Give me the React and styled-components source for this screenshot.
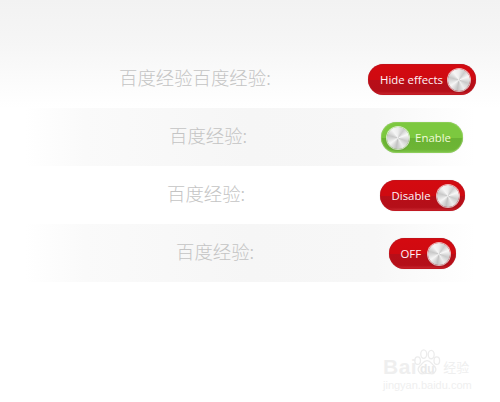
import React from "react";
import styled, { createGlobalStyle } from "styled-components";

const Global = createGlobalStyle`
  html, body { margin: 0; padding: 0; background: #fff; }
  body { width: 500px; height: 402px; overflow: hidden; }
`;

const Page = styled.div`
  position: relative;
  width: 500px;
  height: 402px;
  padding-top: 50px;
  box-sizing: border-box;
  background: linear-gradient(180deg, #f2f2f2 0, #f6f6f6 45px, #ffffff 108px);
  font-family: "Noto Sans CJK SC", "Noto Sans", sans-serif;
`;

const Row = styled.div`
  display: flex;
  align-items: center;
  height: 58px;
  background: ${(p) =>
    p.$shaded
      ? "linear-gradient(90deg, #ffffff 5%, #fafafa 17%, #f6f6f6 50%, #f7f7f7 75%, #ffffff 95%)"
      : "transparent"};
`;

const LabelCell = styled.div`
  width: 344px;
  padding-left: ${(p) => p.$indent}px;
  padding-bottom: 4px;
  box-sizing: border-box;
`;

const Label = styled.span`
  font-size: 18.4px;
  font-weight: 300;
  line-height: 26px;
  color: #c4c4c4;
  white-space: nowrap;
`;

const SwitchCell = styled.div`
  width: 156px;
  display: flex;
  justify-content: center;
  padding-top: 1px;
  box-sizing: border-box;
`;

const Switch = styled.div`
  width: ${(p) => p.$width}px;
  height: 31px;
  box-sizing: border-box;
  display: flex;
  flex-direction: ${(p) => (p.$on ? "row-reverse" : "row")};
  align-items: center;
  justify-content: space-between;
  padding: ${(p) => (p.$on ? "0 12px 0 6px" : "0 6px 0 12px")};
  border-radius: 15.5px;
  color: ${(p) => (p.$on ? "#f0fbd8" : "#fff2f6")};
  background: ${(p) =>
    p.$on
      ? "linear-gradient(180deg, #7cc83f 0, #7cc83f 50%, #6ab334 52%, #6db535 88%, #82c850 100%)"
      : "linear-gradient(180deg, #d40a10 0, #cf0a11 50%, #b80e18 52%, #b40f19 88%, #cc2a32 100%)"};
  box-shadow: inset 0 0 0 1px ${(p) => (p.$on ? "rgba(150,210,100,.6)" : "rgba(190,20,30,.7)")},
    0 0 1px rgba(0, 0, 0, 0.25);
`;

const SwitchText = styled.span`
  font-family: "Open Sans", "Noto Sans", sans-serif;
  font-size: 11.4px;
  font-weight: 500;
  line-height: 16px;
  white-space: nowrap;
`;

const Knob = styled.span`
  flex: none;
  width: 22px;
  height: 22px;
  border-radius: 50%;
  background: conic-gradient(
    #ececec 0deg, #cdcdcd 35deg, #f8f8f8 70deg, #cacaca 110deg, #eeeeee 150deg,
    #c2c2c2 190deg, #f6f6f6 235deg, #c8c8c8 285deg, #f6f6f6 325deg, #ececec 360deg
  );
  box-shadow: 0 0 0 1px rgba(255, 255, 255, 0.7), 0 1px 2px rgba(0, 0, 0, 0.3);
`;

const Watermark = styled.div`
  position: absolute;
  left: 380px;
  top: 345px;
  width: 96px;
  height: 48px;
  color: #efefef;
`;

const WatermarkLogo = styled.div`
  display: flex;
  align-items: flex-end;
  height: 33px;
  padding-left: 3px;
  font-family: "Liberation Sans", sans-serif;
`;

const WatermarkBai = styled.span`
  font-size: 21px;
  font-weight: 700;
  line-height: 22px;
  letter-spacing: 0.5px;
`;

const WatermarkDu = styled.span`
  position: absolute;
  left: 40px;
  top: 18px;
  font-size: 12px;
  font-weight: 700;
  line-height: 13px;
  font-family: "Liberation Sans", sans-serif;
  color: #e9e9e9;
`;

const WatermarkJing = styled.span`
  font-family: "Noto Sans CJK SC", sans-serif;
  font-size: 13px;
  line-height: 18px;
  margin-left: 26px;
  margin-bottom: 2px;
  white-space: nowrap;
`;

const WatermarkUrl = styled.div`
  font-family: "Liberation Sans", sans-serif;
  font-size: 11px;
  line-height: 12px;
  margin-top: 1px;
  padding-left: 3px;
  white-space: nowrap;
`;

const PawSvg = styled.svg`
  position: absolute;
  left: 33px;
  top: 3px;
  width: 28px;
  height: 29px;
`;

const rows = [
  { text: "百度经验百度经验:", indent: 119, label: "Hide effects", width: 108 },
  { text: "百度经验:", indent: 169, label: "Enable", width: 82, on: true, shaded: true },
  { text: "百度经验:", indent: 167, label: "Disable", width: 85 },
  { text: "百度经验:", indent: 176, label: "OFF", width: 67, shaded: true },
];

export default function App() {
  return (
    <Page>
      <Global />
      {rows.map((r) => (
        <Row key={r.label} $shaded={r.shaded}>
          <LabelCell $indent={r.indent}>
            <Label>{r.text}</Label>
          </LabelCell>
          <SwitchCell>
            <Switch $width={r.width} $on={r.on}>
              <SwitchText>{r.label}</SwitchText>
              <Knob />
            </Switch>
          </SwitchCell>
        </Row>
      ))}
      <Watermark>
        <PawSvg viewBox="0 0 30 30" fill="none" stroke="#ececec" strokeWidth="1.4">
          <ellipse cx="5" cy="13" rx="3" ry="4" />
          <ellipse cx="11.5" cy="6" rx="3.2" ry="4.5" />
          <ellipse cx="19.5" cy="6.5" rx="3.2" ry="4.5" />
          <ellipse cx="25.5" cy="13" rx="3" ry="4" />
          <path d="M15 13c-4 0-5 4-8 6-3 3-1 9 4 8 3-.6 5-.6 8 0 5 1 7-5 4-8-3-2-4-6-8-6z" />
        </PawSvg>
        <WatermarkDu>du</WatermarkDu>
        <WatermarkLogo>
          <WatermarkBai>Bai</WatermarkBai>
          <WatermarkJing>经验</WatermarkJing>
        </WatermarkLogo>
        <WatermarkUrl>jingyan.baidu.com</WatermarkUrl>
      </Watermark>
    </Page>
  );
}
